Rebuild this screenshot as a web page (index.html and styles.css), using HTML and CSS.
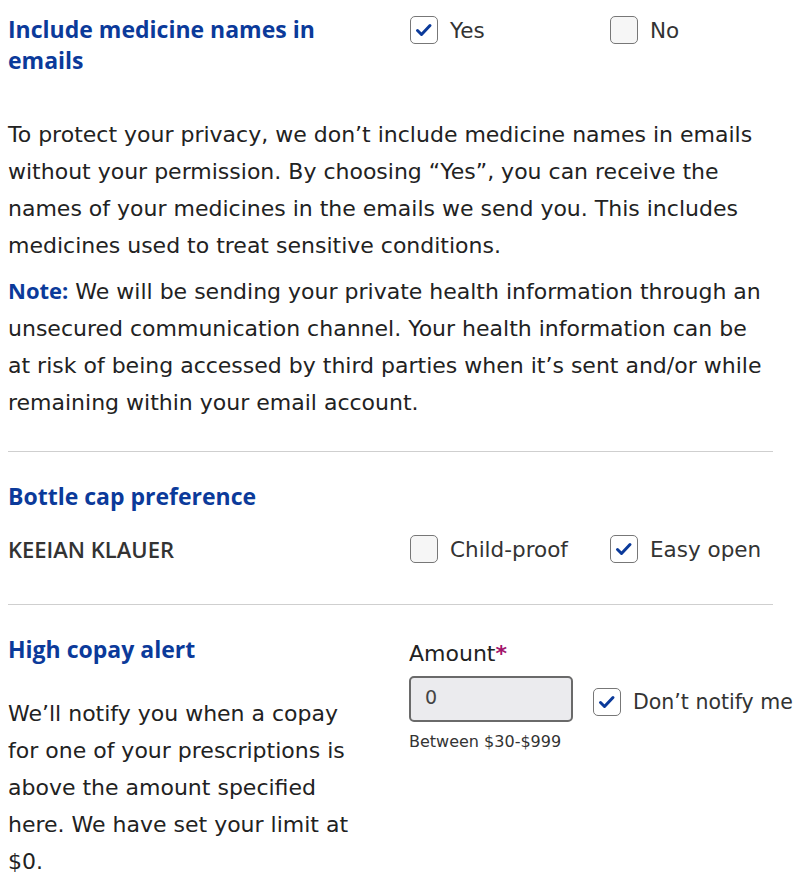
FILE: index.html
```html
<!DOCTYPE html>
<html>
<head>
<meta charset="utf-8">
<link rel="stylesheet" href="styles.css">
</head>
<body>
<div class="page">
  <section class="row top">
    <h2 class="heading">Include medicine names in emails</h2>
    <label class="opt">
      <span class="box checked"><svg viewBox="0 0 28 28" width="28" height="28"><path d="M7.5 14.5 L11.5 18.5 L20 9.5" fill="none" stroke="#0b3a9a" stroke-width="3" stroke-linecap="round" stroke-linejoin="round"/></svg></span>
      <span class="opt-text">Yes</span>
    </label>
    <label class="opt">
      <span class="box"></span>
      <span class="opt-text">No</span>
    </label>
  </section>

  <p class="para first">To protect your privacy, we don’t include medicine names in emails without your permission. By choosing “Yes”, you can receive the names of your medicines in the emails we send you. This includes medicines used to treat sensitive conditions.</p>
  <p class="para"><strong class="note">Note:</strong> We will be sending your private health information through an unsecured communication channel. Your health information can be at risk of being accessed by third parties when it’s sent and/or while remaining within your email account.</p>

  <hr class="divider">

  <h2 class="heading single">Bottle cap preference</h2>
  <section class="row cap">
    <div class="name">KEEIAN KLAUER</div>
    <label class="opt">
      <span class="box"></span>
      <span class="opt-text">Child-proof</span>
    </label>
    <label class="opt">
      <span class="box checked"><svg viewBox="0 0 28 28" width="28" height="28"><path d="M7.5 14.5 L11.5 18.5 L20 9.5" fill="none" stroke="#0b3a9a" stroke-width="3" stroke-linecap="round" stroke-linejoin="round"/></svg></span>
      <span class="opt-text">Easy open</span>
    </label>
  </section>

  <hr class="divider">

  <section class="copay">
    <div class="copay-left">
      <h2 class="heading single">High copay alert</h2>
      <p class="para narrow">We’ll notify you when a copay for one of your prescriptions is above the amount specified here. We have set your limit at $0.</p>
    </div>
    <div class="copay-right">
      <div class="amount-label">Amount<span class="req">*</span></div>
      <div class="amount-row">
        <div class="field">
          <div class="input">0</div>
          <div class="hint">Between $30-$999</div>
        </div>
        <label class="opt notify">
          <span class="box checked"><svg viewBox="0 0 28 28" width="28" height="28"><path d="M7.5 14.5 L11.5 18.5 L20 9.5" fill="none" stroke="#0b3a9a" stroke-width="3" stroke-linecap="round" stroke-linejoin="round"/></svg></span>
          <span class="opt-text">Don’t notify me</span>
        </label>
      </div>
    </div>
  </section>
</div>
</body>
</html>
```

FILE: styles.css
```css
* { box-sizing: border-box; }
html, body { margin: 0; padding: 0; background: #fff; }
body {
  font-family: "DejaVu Sans", "Noto Sans", sans-serif;
  color: #222;
  width: 800px;
  overflow: hidden;
}
.page { padding: 14px 27px 0 8px; }
.heading {
  margin: 0;
  font-family: "Open Sans", "Noto Sans", sans-serif;
  font-size: 23px;
  font-weight: 700;
  color: #0b3a9a;
  line-height: 31px;
}
.row {
  display: grid;
  grid-template-columns: 402px 200px 1fr;
  align-items: start;
}
.top .heading { width: 340px; }
.opt {
  display: flex;
  align-items: center;
  gap: 12px;
  font-size: 21.5px;
  color: #333;
  white-space: nowrap;
}
.notify .opt-text { font-size: 20.5px; }
.box {
  width: 28px;
  height: 28px;
  border: 1.5px solid #777;
  border-radius: 5px;
  background: #f6f6f6;
  display: flex;
  align-items: center;
  justify-content: center;
  flex: none;
}
.box.checked { background: #fff; }
.box svg { display: block; margin: -1.5px; }
.top .opt { margin-top: 2px; }
.para {
  margin: 0;
  font-size: 22px;
  line-height: 37px;
  color: #222;
}
.para.first { margin-top: 40px; }
.para + .para { margin-top: 8px; }
.note { color: #0b3a9a; font-weight: 700; font-family: "Open Sans", sans-serif; }
.divider {
  border: 0;
  border-top: 1px solid #cfcfcf;
  margin: 30px 0 0 0;
}
.heading.single { margin-top: 29px; }
.cap { margin-top: 22px; align-items: center; }
.name { font-size: 22px; font-weight: 600; color: #333; font-family: "Open Sans", sans-serif; }
.cap + .divider { margin-top: 40px; }
.copay {
  display: grid;
  grid-template-columns: 401px 1fr;
}
.copay .heading.single { margin-top: 29px; }
.copay-left .para { margin-top: 30px; width: 356px; }
.copay-right { padding-top: 34px; }
.amount-label { font-size: 22px; color: #222; line-height: 30px; }
.req { color: #a3146b; font-weight: 700; }
.amount-row { display: flex; gap: 20px; margin-top: 7px; }
.input {
  width: 164px;
  height: 46px;
  border: 2px solid #6a6a6a;
  border-radius: 5px;
  background: #ebebee;
  font-size: 19px;
  color: #444;
  padding: 8px 0 0 14px;
}
.hint { font-size: 16px; color: #333; margin-top: 10px; }
.notify { margin-top: 12px; align-self: flex-start; }
```
